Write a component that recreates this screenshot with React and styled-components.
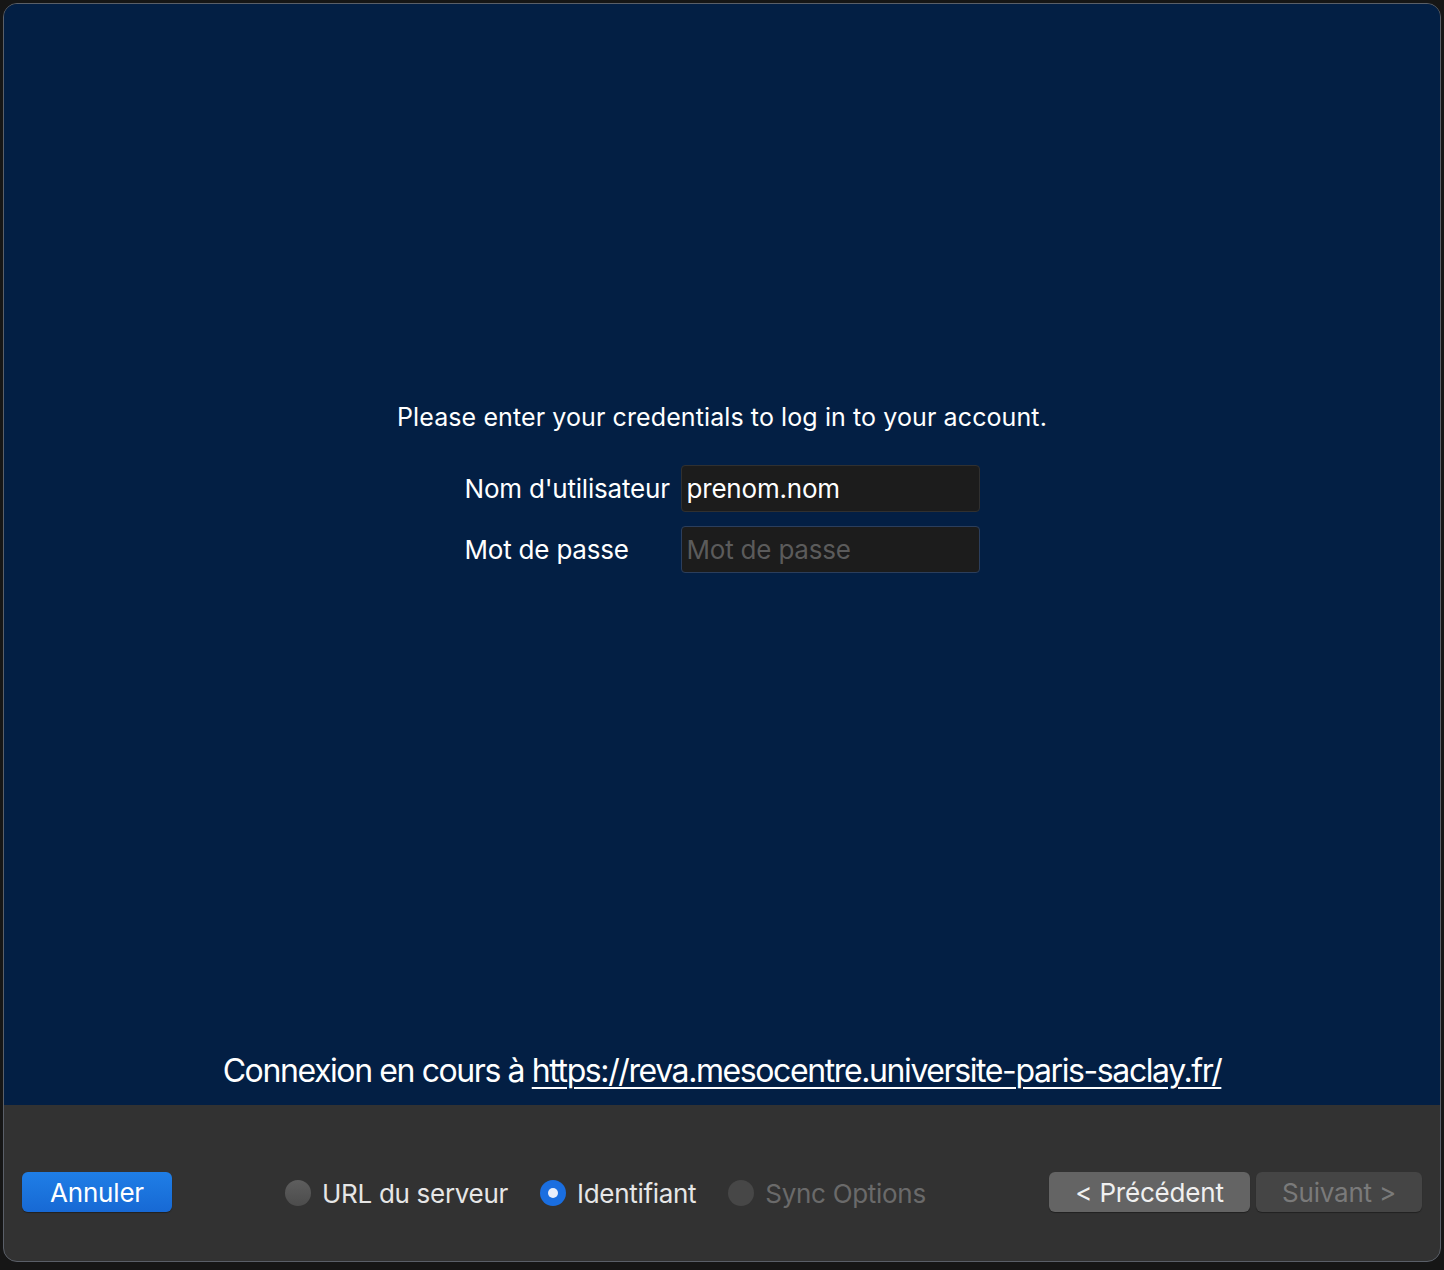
import React from 'react';
import styled, { createGlobalStyle } from 'styled-components';

const GlobalStyle = createGlobalStyle`
  html, body {
    margin: 0;
    padding: 0;
    background: #161616;
  }
  body {
    font-family: Inter, "Noto Sans", sans-serif;
    -webkit-font-smoothing: antialiased;
  }
`

const Window = styled.div`
  margin: 3px;
  height: 1259px;
  display: flex;
  flex-direction: column;
  border: 1px solid #5a5f68;
  border-radius: 14px;
  overflow: hidden;
  box-sizing: border-box;
  background: #323232;
`

const Stage = styled.main`
  flex: 1;
  background: #031f44;
  display: flex;
  flex-direction: column;
  align-items: center;
  padding-top: 396px;
  padding-bottom: 14px;
  color: #fff;
`

const Prompt = styled.p`
  margin: 0;
  font-size: 25px;
  line-height: 34px;
  letter-spacing: 0.1px;
`

const Form = styled.div`
  margin-top: 31px;
  display: grid;
  grid-template-columns: 216px 299px;
  row-gap: 14px;
  align-items: center;
`

const Label = styled.label`
  font-size: 26px;
  letter-spacing: -0.2px;
`

const Field = styled.input`
  box-sizing: border-box;
  width: 299px;
  height: 47px;
  background: #1c1c1c;
  border: 1.5px solid ${p => (p.$focused ? '#2b3e5c' : '#303030')};
  border-radius: 4px;
  color: #fff;
  font-family: inherit;
  font-size: 26px;
  letter-spacing: -0.2px;
  padding: 0 5px;
  outline: none;
  &::placeholder {
    color: #5b5b5b;
  }
`

const Spacer = styled.div`
  flex: 1;
`

const Status = styled.p`
  margin: 0;
  font-size: 32px;
  letter-spacing: -1.4px;
  line-height: 40px;
  a {
    color: #fff;
    text-decoration: underline;
    text-underline-offset: 5px;
    text-decoration-thickness: 2px;
  }
`

const BottomBar = styled.footer`
  height: 156px;
  flex-shrink: 0;
  display: flex;
  align-items: flex-start;
  padding: 67px 18px 0 18px;
  box-sizing: border-box;
`

const Button = styled.button`
  height: 40px;
  width: ${p => p.$w}px;
  border: none;
  border-radius: 6px;
  font-family: inherit;
  font-size: 26px;
  letter-spacing: -0.2px;
  padding: 0;
  color: ${p => (p.$disabled ? '#7a7a7a' : '#f0f0f0')};
  background: ${p =>
    p.$primary
      ? 'linear-gradient(#1f7ee6, #1769d4)'
      : p.$disabled
      ? '#454545'
      : '#646464'};
  box-shadow: 0 1px 1px rgba(0, 0, 0, 0.35);
  ${p => p.$primary && 'color: #fff;'}
`

const Steps = styled.div`
  display: flex;
  align-items: center;
  gap: 32px;
  margin-left: 113px;
  height: 42px;
`

const Step = styled.div`
  display: flex;
  align-items: center;
  gap: 11px;
  font-size: 26px;
  letter-spacing: -0.3px;
  color: ${p => (p.$disabled ? '#6a6a6a' : '#e6e6e6')};
`

const Radio = styled.span`
  width: 26px;
  height: 26px;
  border-radius: 50%;
  box-sizing: border-box;
  display: flex;
  align-items: center;
  justify-content: center;
  background: ${p =>
    p.$checked
      ? '#1a6ee0'
      : p.$disabled
      ? '#474747'
      : 'linear-gradient(#5e5e5e, #4c4c4c)'};
  &::after {
    content: '';
    display: ${p => (p.$checked ? 'block' : 'none')};
    width: 10px;
    height: 10px;
    border-radius: 50%;
    background: #e8eefb;
  }
`

const NavButtons = styled.div`
  margin-left: auto;
  display: flex;
  gap: 6px;
`

export default function App() {
  return (
    <>
      <GlobalStyle />
      <Window>
        <Stage>
          <Prompt>Please enter your credentials to log in to your account.</Prompt>
          <Form>
            <Label>Nom d'utilisateur</Label>
            <Field defaultValue="prenom.nom" />
            <Label>Mot de passe</Label>
            <Field type="password" placeholder="Mot de passe" $focused />
          </Form>
          <Spacer />
          <Status>
            Connexion en cours à{' '}
            <a href="#">https://reva.mesocentre.universite-paris-saclay.fr/</a>
          </Status>
        </Stage>
        <BottomBar>
          <Button $primary $w={150}>Annuler</Button>
          <Steps>
            <Step><Radio />URL du serveur</Step>
            <Step><Radio $checked />Identifiant</Step>
            <Step $disabled><Radio $disabled />Sync Options</Step>
          </Steps>
          <NavButtons>
            <Button $w={201}>&lt; Précédent</Button>
            <Button $disabled $w={166}>Suivant &gt;</Button>
          </NavButtons>
        </BottomBar>
      </Window>
    </>
  );
}
